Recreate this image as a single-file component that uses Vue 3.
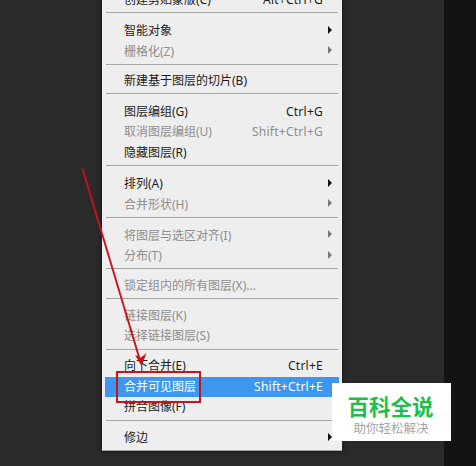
<template>
  <div class="screen">
    <div class="left-pad"></div>
    <div class="menu">
      <template v-for="(item, i) in items" :key="i">
        <div v-if="item.sep" class="sep" :style="{ height: item.sep + 'px' }"></div>
        <div v-else class="row" :class="{ off: item.off, active: item.active }">
          <span class="label">{{ item.label }}</span>
          <span v-if="item.keys" class="keys">{{ item.keys }}</span>
          <span v-if="item.sub" class="caret"></span>
        </div>
      </template>
    </div>
    <div class="middle"></div>
    <div class="right-strip"></div>

    <svg class="arrow" width="476" height="466" viewBox="0 0 476 466" fill="none">
      <path d="M82.5 168.5 L140.5 362" stroke="#cb101c" stroke-width="1.9" />
      <path d="M141.5 366 L135 355 L141 357.5 L146.5 353 Z" fill="#cb101c" />
    </svg>
    <div class="red-box"></div>

    <div class="watermark">
      <div class="wm-title">百科全说</div>
      <div class="wm-sub">助你轻松解决</div>
    </div>
  </div>
</template>

<script setup>
const items = [
  { label: '创建剪贴蒙版(C)', keys: 'Alt+Ctrl+G' },
  { sep: 10.4 },
  { label: '智能对象', sub: true },
  { label: '栅格化(Z)', sub: true, off: true },
  { sep: 8.4 },
  { label: '新建基于图层的切片(B)' },
  { sep: 10.6 },
  { label: '图层编组(G)', keys: 'Ctrl+G' },
  { label: '取消图层编组(U)', keys: 'Shift+Ctrl+G', off: true },
  { label: '隐藏图层(R)' },
  { sep: 10.4 },
  { label: '排列(A)', sub: true },
  { label: '合并形状(H)', sub: true, off: true },
  { sep: 10.4 },
  { label: '将图层与选区对齐(I)', sub: true, off: true },
  { label: '分布(T)', sub: true, off: true },
  { sep: 9 },
  { label: '锁定组内的所有图层(X)...', off: true },
  { sep: 9.4 },
  { label: '链接图层(K)', off: true },
  { label: '选择链接图层(S)', off: true },
  { sep: 9.4 },
  { label: '向下合并(E)', keys: 'Ctrl+E' },
  { label: '合并可见图层', keys: 'Shift+Ctrl+E', active: true },
  { label: '拼合图像(F)' },
  { sep: 10.4 },
  { label: '修边', sub: true }
]
</script>

<style>
html, body {
  margin: 0;
  background: #2a2a2a;
}
</style>

<style scoped>
.screen {
  position: relative;
  display: flex;
  align-items: flex-start;
  width: 476px;
  height: 466px;
  overflow: hidden;
  background: #2a2a2a;
  font-family: "Noto Sans", "Noto Sans CJK SC", sans-serif;
}

.left-pad {
  width: 102px;
  flex: none;
}

.menu {
  width: 240px;
  flex: none;
  box-sizing: border-box;
  margin-top: -10.3px;
  padding: 0 3px 1px 3px;
  background: #eeeeee;
  border-bottom: 1px solid #a0a0a0;
  box-shadow: 0 0 5px rgba(0, 0, 0, 0.55);
  z-index: 1;
}

.middle {
  flex: 1;
}

.right-strip {
  width: 32px;
  height: 466px;
  flex: none;
  background: #131313;
}

.row {
  position: relative;
  display: flex;
  align-items: center;
  justify-content: space-between;
  height: 20.6px;
  padding: 0 16px 0 19px;
  font-size: 12px;
  line-height: 1;
  color: #1c1c1c;
}

.keys {
  letter-spacing: 0.25px;
}

.row.off {
  color: #8d8d8d;
}

.row.active {
  background: #3d97f0;
  color: #ffffff;
}

.caret {
  position: absolute;
  right: 7px;
  top: 5px;
  width: 0;
  height: 0;
  border-top: 4px solid transparent;
  border-bottom: 4px solid transparent;
  border-left: 4px solid #111111;
}

.row.off .caret {
  border-left-color: #7a7a7a;
}

.sep {
  box-sizing: border-box;
  padding-top: 2px;
  margin: 0 1px;
}

.sep::before {
  content: "";
  display: block;
  height: 1px;
  background: #a6a6a6;
}

.arrow {
  position: absolute;
  left: 0;
  top: 0;
  z-index: 2;
}

.red-box {
  position: absolute;
  left: 116px;
  top: 371px;
  width: 81px;
  height: 28px;
  border: 2px solid #c8141f;
  z-index: 3;
}

.watermark {
  position: absolute;
  left: 332px;
  top: 383px;
  width: 119px;
  height: 58px;
  background: #ffffff;
  z-index: 4;
  text-align: center;
}

.wm-title {
  margin-top: 11px;
  margin-left: -2px;
  font-size: 21.5px;
  line-height: 26px;
  font-weight: 700;
  color: #1dbf4b;
  white-space: nowrap;
}

.wm-sub {
  margin-top: 1px;
  margin-left: -1px;
  font-size: 12.5px;
  line-height: 15px;
  color: #a3a3a3;
  white-space: nowrap;
}
</style>
